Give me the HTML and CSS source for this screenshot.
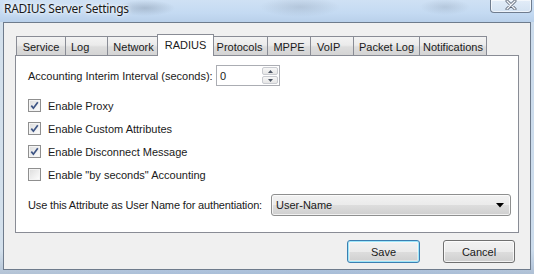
FILE: index.html
```html
<!DOCTYPE html>
<html>
<head>
<meta charset="utf-8">
<link rel="stylesheet" href="styles.css">
</head>
<body>
<div class="window">
  <div class="titlebar">
    <span class="title">RADIUS Server Settings</span>
    <div class="close">
      <svg width="14" height="10" viewBox="0 0 14 10"><path d="M3 1 L11 9 M11 1 L3 9" stroke="#5a6474" stroke-width="3" stroke-linecap="round"/><path d="M3 1 L11 9 M11 1 L3 9" stroke="#f4f6f9" stroke-width="1.4" stroke-linecap="round"/></svg>
    </div>
  </div>
  <div class="client">
    <div class="tabs">
      <div class="tab t-service">Service</div>
      <div class="tab t-log">Log</div>
      <div class="tab t-network">Network</div>
      <div class="tab t-radius selected">RADIUS</div>
      <div class="tab t-protocols">Protocols</div>
      <div class="tab t-mppe">MPPE</div>
      <div class="tab t-voip">VoIP</div>
      <div class="tab t-packet">Packet Log</div>
      <div class="tab t-notif">Notifications</div>
    </div>
    <div class="panel">
      <div class="row spin-row">
        <span class="label interval-label">Accounting Interim Interval (seconds):</span>
        <div class="spin">
          <span class="spin-value">0</span>
          <div class="spin-buttons">
            <div class="spin-btn"><svg width="5" height="3" viewBox="0 0 5 3"><path d="M2.5 0 L5 3 L0 3 Z" fill="#4d5665"/></svg></div>
            <div class="spin-btn"><svg width="5" height="3" viewBox="0 0 5 3"><path d="M0 0 L5 0 L2.5 3 Z" fill="#4d5665"/></svg></div>
          </div>
        </div>
      </div>
      <div class="checks">
        <label class="check-row"><span class="cb"><svg width="11" height="11" viewBox="0 0 11 11"><path d="M2.3 5.6 L4.4 8.2 L8.8 2.3" fill="none" stroke="#3e5585" stroke-width="1.7"/></svg></span><span>Enable Proxy</span></label>
        <label class="check-row"><span class="cb"><svg width="11" height="11" viewBox="0 0 11 11"><path d="M2.3 5.6 L4.4 8.2 L8.8 2.3" fill="none" stroke="#3e5585" stroke-width="1.7"/></svg></span><span>Enable Custom Attributes</span></label>
        <label class="check-row"><span class="cb"><svg width="11" height="11" viewBox="0 0 11 11"><path d="M2.3 5.6 L4.4 8.2 L8.8 2.3" fill="none" stroke="#3e5585" stroke-width="1.7"/></svg></span><span>Enable Disconnect Message</span></label>
        <label class="check-row"><span class="cb"></span><span>Enable "by seconds" Accounting</span></label>
      </div>
      <div class="row combo-row">
        <span class="label attr-label">Use this Attribute as User Name for authentiation:</span>
        <div class="combo">
          <span>User-Name</span>
          <svg width="8" height="5" viewBox="0 0 8 5"><path d="M0 0 L8 0 L4 4.5 Z" fill="#000"/></svg>
        </div>
      </div>
    </div>
    <div class="buttons">
      <div class="btn default save">Save</div>
      <div class="btn cancel">Cancel</div>
    </div>
  </div>
</div>
</body>
</html>
```
FILE: styles.css
```css
* { box-sizing: border-box; }
html, body { margin: 0; padding: 0; }
body {
  width: 534px;
  height: 274px;
  overflow: hidden;
  font-family: "Liberation Sans", Arial, sans-serif;
  font-size: 11px;
  color: #1a1a1a;
}
.window {
  width: 534px;
  height: 274px;
  padding: 0 3px 4px 3px;
  display: flex;
  flex-direction: column;
  background:
    linear-gradient(180deg, rgba(255,255,255,0) 0, rgba(255,255,255,0) 250px, rgba(120,140,170,0.35) 274px),
    linear-gradient(90deg, #d3e0ec 0, #c7dbf1 30%, #c1d7ef 60%, #c6d9ee 85%, #ccdcec 100%);
}
.titlebar {
  height: 22px;
  flex: none;
  display: flex;
  justify-content: space-between;
  align-items: flex-start;
  margin: 0 -3px;
  padding: 0 3px 0 4px;
  background:
    radial-gradient(ellipse 30px 8px at 145px 8px, rgba(110,125,145,0.35), rgba(110,125,145,0)),
    radial-gradient(ellipse 40px 10px at 300px 7px, rgba(130,145,165,0.3), rgba(130,145,165,0)),
    radial-gradient(ellipse 25px 8px at 445px 7px, rgba(120,135,155,0.25), rgba(120,135,155,0)),
    linear-gradient(180deg, #cfe1f4 0, #c4daf2 60%, #b9d0ea 100%);
}
.title {
  font-family: "Noto Sans", "Open Sans", sans-serif;
  font-size: 12px;
  line-height: 12px;
  margin-top: 3px;
  color: #1a1a1a;
  text-shadow: 0 0 6px #fff, 0 0 3px #fff;
  letter-spacing: -0.3px;
}
.close {
  width: 42px;
  height: 13px;
  margin-right: -1px;
  border: 1px solid #6f7c8e;
  border-top: none;
  border-radius: 0 0 4px 4px;
  background: linear-gradient(180deg, rgba(235,242,250,0.7), rgba(215,228,242,0.8));
  box-shadow: inset 0 0 0 1px rgba(255,255,255,0.6);
  display: flex;
  justify-content: center;
  align-items: flex-start;
}
.client {
  flex: 1;
  border: 1px solid #6e7b8c;
  background: #f0f0f0;
  padding-top: 11px;
  display: flex;
  flex-direction: column;
}
.tabs {
  display: flex;
  align-items: flex-end;
  height: 22px;
  margin-left: 12px;
  position: relative;
  z-index: 1;
}
.tab {
  height: 20px;
  border: 1px solid #898c95;
  margin-right: -1px;
  background: linear-gradient(180deg, #f3f3f3 0, #ebebeb 45%, #dddddd 55%, #d4d4d4 100%);
  display: flex;
  justify-content: center;
  align-items: center;
  padding-top: 1px;
}
.tab.selected {
  height: 22px;
  background: #fff;
  border-bottom: none;
  margin: 0 -3px 0 -2px;
  position: relative;
  z-index: 2;
  padding-top: 0;
  padding-bottom: 2px;
}
.t-service { width: 50px; }
.t-log { width: 43px; justify-content: flex-start; padding-left: 5px; }
.t-network { width: 53px; }
.t-radius { width: 57px; }
.t-protocols { width: 57px; }
.t-mppe { width: 44px; }
.t-voip { width: 44px; justify-content: flex-start; padding-left: 6px; }
.t-packet { width: 67px; }
.t-notif { width: 68px; }
.panel {
  margin: -1px 0 0 11px;
  width: 504px;
  height: 178px;
  border: 1px solid #898c95;
  background: #fff;
  padding: 9px 0 0 12px;
  display: flex;
  flex-direction: column;
}
.row {
  display: flex;
  align-items: center;
}
.interval-label { width: 188px; }
.spin {
  width: 64px;
  height: 21px;
  border: 1px solid #abadb3;
  background: #fff;
  display: flex;
  justify-content: space-between;
  align-items: stretch;
  padding: 1px 1px 1px 3px;
}
.spin-value { align-self: center; }
.spin-buttons {
  width: 16px;
  display: flex;
  flex-direction: column;
  gap: 1px;
}
.spin-btn {
  flex: 1;
  border: 1px solid #c9cbd0;
  border-radius: 2px;
  background: linear-gradient(180deg, #f7f7f7, #e6e6e6);
  display: flex;
  justify-content: center;
  align-items: center;
}
.checks {
  margin-top: 8px;
  display: flex;
  flex-direction: column;
}
.check-row {
  height: 23px;
  display: flex;
  align-items: center;
  gap: 7px;
}
.cb {
  width: 13px;
  height: 13px;
  border: 1px solid #8f8f8f;
  background: linear-gradient(135deg, #dcdcdc 0, #f4f4f4 70%, #ffffff 100%);
  box-shadow: inset 0 0 0 1px #f4f4f4;
  display: flex;
  justify-content: center;
  align-items: center;
}
.combo-row { margin-top: 8px; }
.attr-label { width: 243px; letter-spacing: -0.15px; }
.combo {
  width: 240px;
  height: 22px;
  border: 1px solid #8e8f8f;
  border-radius: 3px;
  background: linear-gradient(180deg, #f2f2f2 0, #ebebeb 50%, #dddddd 51%, #cfcfcf 100%);
  box-shadow: inset 0 0 0 1px rgba(255,255,255,0.7);
  display: flex;
  justify-content: space-between;
  align-items: center;
  padding: 0 6px 0 4px;
}
.buttons {
  display: flex;
  justify-content: flex-end;
  gap: 23px;
  margin: 7px 15px 0 0;
}
.btn {
  height: 23px;
  border: 1px solid #707070;
  border-radius: 3px;
  background: linear-gradient(180deg, #f2f2f2 0, #ebebeb 50%, #dddddd 51%, #cfcfcf 100%);
  box-shadow: inset 0 0 0 1px rgba(255,255,255,0.75);
  display: flex;
  justify-content: center;
  align-items: center;
}
.save { width: 73px; }
.cancel { width: 72px; }
.btn.default {
  border-color: #3c7fb1;
  box-shadow: inset 0 0 0 1px #9ee6fa, inset 0 0 0 2px rgba(255,255,255,0.4);
}
```
